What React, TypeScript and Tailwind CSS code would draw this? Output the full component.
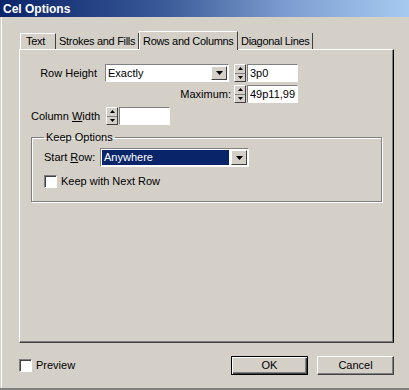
import React from "react";

const font = { fontFamily: '"Liberation Sans", Arial, sans-serif' };

function Spinner({ value }: { value: string }) {
  return (
    <div className="flex h-[18px] items-stretch">
      <div className="flex w-[12px] flex-col border border-t-white border-l-white border-r-[#404040] border-b-[#404040] bg-[#d4d0c8]">
        <div className="flex flex-1 items-center justify-center border-b border-[#808080]">
          <svg width="5" height="3" viewBox="0 0 5 3">
            <path d="M2.5 0L5 3H0z" fill="#000" />
          </svg>
        </div>
        <div className="flex flex-1 items-center justify-center">
          <svg width="5" height="3" viewBox="0 0 5 3">
            <path d="M0 0h5L2.5 3z" fill="#000" />
          </svg>
        </div>
      </div>
      <div className="ml-px flex w-[51px] items-center border border-t-[#808080] border-l-[#808080] border-r-white border-b-white bg-white pl-[2px] text-[11px] leading-none text-black">
        {value}
      </div>
    </div>
  );
}

function DropButton() {
  return (
    <div className="m-px flex w-[16px] items-center justify-center border border-t-white border-l-white border-r-[#404040] border-b-[#404040] bg-[#d4d0c8]">
      <svg width="7" height="4" viewBox="0 0 7 4">
        <path d="M0 0h7L3.5 4z" fill="#000" />
      </svg>
    </div>
  );
}

function Check({ label }: { label: string }) {
  return (
    <div className="flex items-center gap-[4px]">
      <div className="h-[13px] w-[13px] border border-t-[#808080] border-l-[#808080] border-r-white border-b-white bg-white shadow-[inset_1px_1px_0_#404040]" />
      <span className="text-[11px] leading-none text-black">{label}</span>
    </div>
  );
}

export default function App() {
  return (
    <div
      className="flex h-[390px] w-[409px] flex-col overflow-hidden bg-[#d4d0c8] text-black"
      style={font}
    >
      {/* title bar */}
      <div className="flex h-[17px] items-center bg-[linear-gradient(to_right,#0a246a_0%,#3a5a98_40%,#7d9dd0_70%,#a6caf0_100%)] pl-[3px]">
        <span className="text-[12px] font-bold leading-none text-white">Cel Options</span>
      </div>

      <div className="flex flex-1 flex-col border-b-2 border-[#808080] pl-px">
        <div className="flex flex-1 flex-col border-l border-white pl-[17px] pr-[15px]">
          {/* tabs */}
          <div className="mt-[14px] flex h-[18px] items-end whitespace-nowrap pl-px text-[11px] leading-none tracking-[-0.3px]">
            <div className="flex h-[16px] w-[36px] items-center border-l border-t border-white border-r border-r-[#404040] pl-[5px]">
              Text
            </div>
            <div className="flex h-[16px] w-[83px] items-center border-r border-[#404040] pl-[3px]">
              Strokes and Fills
            </div>
            <div className="relative z-10 -mb-px flex h-[19px] w-[99px] items-center border-l border-t border-white border-r border-r-[#404040] bg-[#d4d0c8] pl-[3px]">
              Rows and Columns
            </div>
            <div className="flex h-[16px] w-[75px] items-center border-r border-[#404040] pl-[3px]">
              Diagonal Lines
            </div>
          </div>

          {/* panel */}
          <div className="flex h-[294px] flex-col border border-t-white border-l-white border-r-[#000] border-b-[#404040] shadow-[inset_-1px_-1px_0_#808080]">
            <div className="mt-[14px] flex items-center">
              <div className="w-[85px] pr-[8px] text-right text-[11px] leading-none">Row Height</div>
              <div className="flex h-[18px] w-[124px] items-stretch border border-t-[#808080] border-l-[#808080] border-r-white border-b-white bg-white">
                <div className="flex flex-1 items-center pl-[2px] text-[11px] leading-none">Exactly</div>
                <DropButton />
              </div>
              <div className="ml-[5px]">
                <Spinner value="3p0" />
              </div>
            </div>

            <div className="mt-[3px] flex items-center">
              <div className="w-[214px] pr-[3px] text-right text-[11px] leading-none">Maximum:</div>
              <Spinner value="49p11,99" />
            </div>

            <div className="mt-[4px] flex items-center">
              <div className="w-[86px] whitespace-nowrap pl-[11px] text-[11px] leading-none">
                Column <span className="underline">W</span>idth
              </div>
              <Spinner value="" />
            </div>

            <fieldset className="mx-[11px] mt-[7px] h-[70px] border border-[#808080] px-[12px] shadow-[inset_1px_1px_0_white,1px_1px_0_white]">
              <legend className="px-[2px] text-[11px] leading-none">Keep Options</legend>
              <div className="mt-[5px] flex items-center">
                <div className="w-[56px] text-[11px] leading-none">
                  Start <span className="underline">R</span>ow:
                </div>
                <div className="flex h-[19px] w-[149px] items-stretch border border-t-[#808080] border-l-[#808080] border-r-white border-b-white bg-white">
                  <div className="m-px flex flex-1 items-center bg-[#0a246a] pl-[2px] text-[11px] leading-none text-white">
                    Anywhere
                  </div>
                  <DropButton />
                </div>
              </div>
              <div className="mt-[8px]">
                <Check label="Keep with Next Row" />
              </div>
            </fieldset>
          </div>

          {/* footer */}
          <div className="mt-[13px] flex items-center">
            <div className="flex-1">
              <Check label="Preview" />
            </div>
            <button className="flex h-[19px] w-[77px] items-center justify-center border border-black bg-[#d4d0c8] text-[11px] leading-none shadow-[inset_1px_1px_0_white,inset_-1px_-1px_0_#404040,inset_-2px_-2px_0_#808080]">
              OK
            </button>
            <button className="ml-[9px] flex h-[19px] w-[77px] items-center justify-center border border-t-white border-l-white border-r-[#404040] border-b-[#404040] bg-[#d4d0c8] text-[11px] leading-none shadow-[inset_-1px_-1px_0_#808080]">
              Cancel
            </button>
          </div>
        </div>
      </div>
    </div>
  );
}
